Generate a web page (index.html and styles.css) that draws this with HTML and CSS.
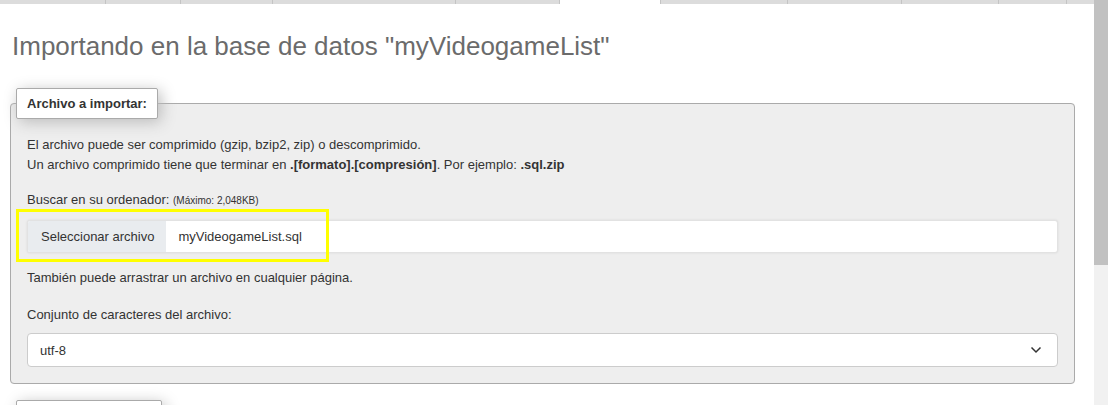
FILE: index.html
```html
<!DOCTYPE html>
<html lang="es">
<head>
<meta charset="utf-8">
<title>Importar</title>
<link rel="stylesheet" href="styles.css">
</head>
<body>
<div class="page">
  <nav class="tabs">
    <span class="tab t1"></span>
    <span class="tab t2"></span>
    <span class="tab t3"></span>
    <span class="tab t4"></span>
    <span class="tab t5"></span>
    <span class="tab active"></span>
    <span class="tab t7"></span>
    <span class="tab t8"></span>
    <span class="tab t9"></span>
    <span class="tab t10"></span>
    <span class="tab t11"></span>
  </nav>

  <h1 class="title">Importando en la base de datos "myVideogameList"</h1>

  <fieldset class="box">
    <legend class="box-legend">Archivo a importar:</legend>
    <p class="intro">El archivo puede ser comprimido (gzip, bzip2, zip) o descomprimido.<br>Un archivo comprimido tiene que terminar en <b>.[formato].[compresión]</b>. Por ejemplo: <b>.sql.zip</b></p>
    <p class="browse">Buscar en su ordenador: <small class="max">(Máximo: 2,048KB)</small></p>
    <div class="file-row">
      <div class="file-input">
        <span class="file-btn">Seleccionar archivo</span>
        <span class="file-name">myVideogameList.sql</span>
      </div>
      <div class="highlight"></div>
    </div>
    <p class="drag">También puede arrastrar un archivo en cualquier página.</p>
    <p class="charset-label">Conjunto de caracteres del archivo:</p>
    <div class="select">
      <span class="select-value">utf-8</span>
      <svg class="chevron" width="12" height="8" viewBox="0 0 12 8"><path d="M1.5 1.5 L6 6 L10.5 1.5" fill="none" stroke="#333" stroke-width="1.5"/></svg>
    </div>
  </fieldset>

  <fieldset class="box next">
    <legend class="box-legend blank"></legend>
  </fieldset>
</div>
<div class="scrollbar"><div class="thumb"></div></div>
</body>
</html>
```
FILE: styles.css
```css
html, body {
  margin: 0;
  padding: 0;
  background: #fff;
  overflow: hidden;
}
body {
  font-family: "Liberation Sans", Arial, sans-serif;
  font-size: 13px;
  color: #333;
  height: 405px;
}
.page {
  width: 1094px;
}
.tabs {
  display: flex;
  height: 4px;
}
.tab {
  height: 4px;
  background: #dcdcdc;
  border-right: 1px solid #c4c4c4;
  box-sizing: border-box;
}
.t1 { width: 106px; }
.t2 { width: 75px; }
.t3 { width: 92px; }
.t4 { width: 183px; }
.t5 { width: 104px; }
.active { width: 101px; background: #fff; border-right: 1px solid #c4c4c4; }
.t7 { width: 127px; }
.t8 { width: 114px; }
.t9 { width: 97px; }
.t10 { width: 68px; }
.t11 { width: 27px; border-right: none; }

.title {
  margin: 0;
  padding: 26px 0 0 12px;
  font-size: 26px;
  font-weight: normal;
  line-height: 32px;
  color: #6b6b6b;
}

.box {
  margin: 26px 19px 0 10px;
  padding: 0 16px 16px 16px;
  border: 1px solid #aaa;
  border-radius: 4px;
  background: #eee;
  min-width: 0;
}
.box-legend {
  margin-left: -11px;
  padding: 0 10px;
  height: 29px;
  line-height: 29px;
  border: 1px solid #aaa;
  border-radius: 2px;
  background: #fff;
  font-weight: bold;
  color: #333;
  box-shadow: 3px 3px 15px #bbb;
}
.box p {
  margin: 0;
  line-height: 20px;
}
.intro {
  padding-top: 16px;
}
.intro b { font-weight: bold; }
.browse {
  padding-top: 15px;
}
.max {
  font-size: 10px;
}
.file-row {
  position: relative;
  margin-top: 9px;
}
.file-input {
  display: flex;
  align-items: stretch;
  height: 31px;
  border: 1px solid #e2e2e2;
  border-radius: 3px;
  box-shadow: 0 0 2px #d4d4d4;
  background: #fff;
  overflow: hidden;
}
.file-btn {
  display: flex;
  align-items: center;
  padding: 0 12px 0 13px;
  background: #e9ecef;
  color: #333;
}
.file-name {
  display: flex;
  align-items: center;
  padding-left: 12px;
  color: #333;
}
.highlight {
  position: absolute;
  left: -11px;
  top: -11px;
  width: 307px;
  height: 47px;
  border: 3px solid #ffff00;
}
.drag {
  padding-top: 15px;
}
.charset-label {
  padding-top: 17px;
}
.select {
  margin-top: 8px;
  height: 32px;
  border: 1px solid #ccc;
  border-radius: 4px;
  background: #fff;
  display: flex;
  align-items: center;
  justify-content: space-between;
  padding: 0 15px 0 12px;
}
.select-value { color: #333; }

.next {
  margin-top: 16px;
  height: 40px;
}
.blank {
  width: 124px;
}

.scrollbar {
  position: fixed;
  top: 0;
  right: 0;
  width: 14px;
  height: 405px;
  background: #f1f1f1;
}
.thumb {
  height: 265px;
  background: #c1c1c1;
}
```
